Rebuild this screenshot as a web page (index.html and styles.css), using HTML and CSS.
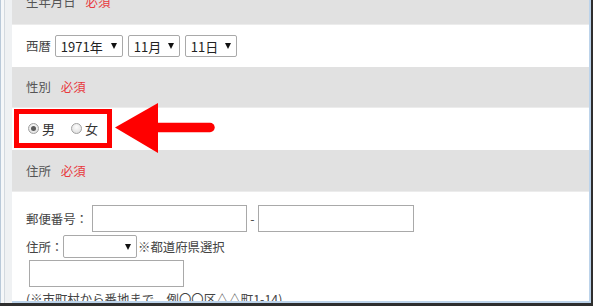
FILE: index.html
```html
<!DOCTYPE html>
<html lang="ja">
<head>
<meta charset="utf-8">
<link rel="stylesheet" href="styles.css">
</head>
<body>
<div class="window">
  <div class="side"></div>
  <div class="page">
    <div class="head first"><span class="lbl">生年月日</span><span class="req">必須</span></div>
    <div class="row b1">
      <span class="txt">西暦</span>
      <span class="sel w68">1971年<i class="tri"></i></span>
      <span class="sel w52">11月<i class="tri"></i></span>
      <span class="sel w52">11日<i class="tri"></i></span>
    </div>
    <div class="head"><span class="lbl">性別</span><span class="req">必須</span></div>
    <div class="row b2">
      <div class="redbox">
        <span class="radio on"></span><span class="rtxt">男</span>
        <span class="radio"></span><span class="rtxt">女</span>
      </div>
      <svg class="arrow" width="110" height="58" viewBox="0 0 110 58">
        <polygon points="3,27.5 46,3 46,53" fill="#ff0000"/>
        <line x1="40" y1="27.5" x2="98" y2="27.5" stroke="#ff0000" stroke-width="9.5" stroke-linecap="round"/>
      </svg>
    </div>
    <div class="head h3"><span class="lbl">住所</span><span class="req">必須</span></div>
    <div class="row b3">
      <div class="line l1">
        <span class="fl w66">郵便番号：</span>
        <span class="inp w155"></span>
        <span class="dash">-</span>
        <span class="inp w156"></span>
      </div>
      <div class="line l2">
        <span class="fl w37">住所：</span>
        <span class="sel w74 h23"><i class="tri"></i></span>
        <span class="note">※都道府県選択</span>
      </div>
      <div class="line l3">
        <span class="inp w155"></span>
      </div>
      <div class="line l4">(※市町村から番地まで　例〇〇区△△町1-14)</div>
    </div>
  </div>
</div>
</body>
</html>
```

FILE: styles.css
```css
html, body {
  margin: 0;
  padding: 0;
  background: #ffffff;
}
body {
  width: 593px;
  height: 306px;
  overflow: hidden;
  font-family: "Noto Sans CJK JP", "Noto Sans", sans-serif;
  font-size: 12.4px;
  color: #333333;
}
.window {
  display: flex;
  width: 593px;
  height: 306px;
  box-sizing: border-box;
  border-right: 2px solid #2e2e2e;
  border-bottom: 3px solid #2e2e2e;
  overflow: hidden;
}
.side {
  width: 12px;
  flex: none;
  background: linear-gradient(to right,
    #b9c9d9 0, #b9c9d9 1px,
    #f5f7f9 1px, #f5f7f9 4px,
    #d3d9df 4px, #d3d9df 5px,
    #eff1f3 5px, #eff1f3 12px);
}
.page {
  flex: 1;
  display: flex;
  flex-direction: column;
  overflow: hidden;
  border-right: 2px solid #bcd3ea;
  border-bottom: 2px solid #bcd3ea;
}
.head {
  flex: none;
  height: 41px;
  display: flex;
  align-items: center;
  padding-left: 14px;
  background: #e1e1e1;
  border-bottom: 1px solid #ececec;
  box-sizing: border-box;
  white-space: nowrap;
}
.head.first {
  margin-top: -20px;
  height: 45px;
}
.head.h3 {
  height: 42px;
}
.lbl {
  color: #555555;
}
.req {
  color: #e8383d;
  margin-left: 10px;
}
.row {
  flex: none;
  background: #ffffff;
}
.b1 {
  height: 42px;
  display: flex;
  align-items: center;
  padding-left: 14px;
  gap: 5px;
}
.b1 .txt {
  margin-right: -1px;
  color: #444444;
}
.sel {
  display: inline-flex;
  align-items: center;
  justify-content: space-between;
  height: 22px;
  box-sizing: border-box;
  border: 1px solid #a9a9a9;
  border-radius: 2px;
  padding: 0 5px 0 5px;
  background: #ffffff;
  color: #222222;
  line-height: 1;
  font-size: 13px;
  flex: none;
}
.sel.h23 {
  height: 23px;
  justify-content: flex-end;
}
.w68 { width: 68px; }
.w52 { width: 52px; }
.w74 { width: 74px; }
.tri {
  display: block;
  width: 0;
  height: 0;
  border-left: 3.5px solid transparent;
  border-right: 3.5px solid transparent;
  border-top: 6px solid #111111;
}
.b2 {
  height: 42px;
  position: relative;
  display: flex;
  align-items: flex-start;
}
.redbox {
  margin: 1px 0 0 2px;
  width: 98px;
  height: 39px;
  box-sizing: border-box;
  border: 5px solid #ff0000;
  display: flex;
  align-items: center;
  padding-left: 9px;
  white-space: nowrap;
}
.radio {
  width: 11px;
  height: 11px;
  box-sizing: border-box;
  border-radius: 50%;
  border: 1px solid #a0a0a0;
  background: radial-gradient(circle at 50% 35%, #fdfdfd 0, #e4e4e4 70%, #d4d4d4 100%);
  position: relative;
  flex: none;
}
.radio.on::after {
  content: "";
  position: absolute;
  left: 2px;
  top: 2px;
  width: 5px;
  height: 5px;
  border-radius: 50%;
  background: #5a5a5a;
}
.rtxt {
  margin-left: 3px;
  margin-right: 16px;
  color: #333333;
  font-size: 13px;
}
.arrow {
  position: absolute;
  left: 100px;
  top: -8px;
  overflow: visible;
  z-index: 2;
}
.b3 {
  flex: 1;
  padding: 13px 0 0 14px;
}
.line {
  display: flex;
  align-items: center;
  white-space: nowrap;
}
.fl {
  flex: none;
  color: #444444;
}
.w66 { width: 66px; }
.w37 { width: 37px; }
.inp {
  display: block;
  height: 27px;
  box-sizing: border-box;
  border: 1px solid #a9a9a9;
  background: #ffffff;
  flex: none;
}
.w155 { width: 155px; }
.w156 { width: 156px; }
.dash {
  width: 11px;
  text-align: center;
  color: #444444;
  flex: none;
}
.l2 {
  margin-top: 3px;
}
.note {
  margin-left: 1px;
  color: #444444;
}
.l3 {
  margin-top: 2px;
  padding-left: 3px;
}
.l4 {
  margin-top: 3px;
  color: #444444;
}
```
